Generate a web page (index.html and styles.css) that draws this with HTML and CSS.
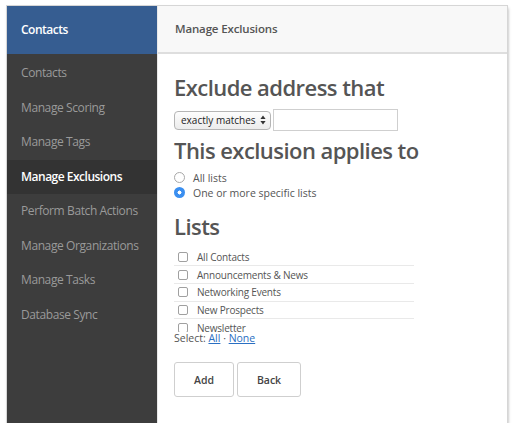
FILE: index.html
```html
<!DOCTYPE html>
<html>
<head>
<meta charset="utf-8">
<link rel="stylesheet" href="styles.css">
</head>
<body>
<div class="window">
  <aside class="sidebar">
    <div class="brand">Contacts</div>
    <nav class="nav">
      <div class="nav-item">Contacts</div>
      <div class="nav-item">Manage Scoring</div>
      <div class="nav-item">Manage Tags</div>
      <div class="nav-item active">Manage Exclusions</div>
      <div class="nav-item">Perform Batch Actions</div>
      <div class="nav-item">Manage Organizations</div>
      <div class="nav-item">Manage Tasks</div>
      <div class="nav-item">Database Sync</div>
    </nav>
  </aside>
  <main class="main">
    <header class="topbar">Manage Exclusions</header>
    <section class="content">
      <h2 class="heading first">Exclude address that</h2>
      <div class="match-row">
        <div class="select">
          <span>exactly matches</span>
          <svg class="arrows" width="6" height="10" viewBox="0 0 6 10"><path d="M3 0.5 L5.6 4 L0.4 4 Z M3 9.5 L5.6 6 L0.4 6 Z" fill="#333"/></svg>
        </div>
        <div class="text-input"></div>
      </div>
      <h2 class="heading second">This exclusion applies to</h2>
      <div class="radios">
        <label class="radio-row"><span class="radio"></span>All lists</label>
        <label class="radio-row"><span class="radio checked"></span>One or more specific lists</label>
      </div>
      <h2 class="heading third">Lists</h2>
      <div class="list-box">
        <div class="list-row"><span class="check"></span>All Contacts</div>
        <div class="list-row"><span class="check"></span>Announcements &amp; News</div>
        <div class="list-row"><span class="check"></span>Networking Events</div>
        <div class="list-row"><span class="check"></span>New Prospects</div>
        <div class="list-row"><span class="check"></span>Newsletter</div>
      </div>
      <div class="select-links">Select: <a href="#">All</a> · <a href="#">None</a></div>
      <div class="buttons">
        <button class="btn add">Add</button>
        <button class="btn back">Back</button>
      </div>
    </section>
  </main>
</div>
</body>
</html>
```
FILE: styles.css
```css
html, body {
  margin: 0;
  padding: 0;
  background: #ffffff;
}
body {
  padding: 6px 0 0 7px;
  font-family: "Open Sans", "Noto Sans", sans-serif;
  color: #555;
}
.window {
  width: 500px;
  height: 417px;
  display: flex;
  overflow: hidden;
  background: #fff;
  box-shadow: 0 0 0 1px #d6d6d6, 1px 2px 3px rgba(0,0,0,0.35);
}
.sidebar {
  width: 150px;
  flex: none;
  background: #3d3d3d;
  display: flex;
  flex-direction: column;
}
.brand {
  height: 48px;
  line-height: 47px;
  background: #365d91;
  color: #fff;
  font-weight: 600;
  font-size: 12px;
  letter-spacing: -0.5px;
  padding-left: 14px;
}
.nav {
  padding-top: 2px;
  display: flex;
  flex-direction: column;
}
.nav-item {
  height: 34.5px;
  line-height: 34px;
  padding-left: 14px;
  color: #9a9a9a;
  font-size: 12px;
  letter-spacing: -0.4px;
}
.nav-item.active {
  background: #333333;
  color: #fff;
  font-weight: 600;
  letter-spacing: -0.5px;
}
.main {
  flex: 1;
  display: flex;
  flex-direction: column;
  border-left: 1px solid #e8e8e8;
}
.topbar {
  height: 46px;
  line-height: 46px;
  background: #f8f8f8;
  border-bottom: 2px solid #dedede;
  padding-left: 17px;
  font-size: 11.5px;
  font-weight: 600;
  letter-spacing: -0.15px;
  color: #555;
}
.content {
  padding-left: 16px;
}
.heading {
  margin: 0;
  font-size: 22px;
  font-weight: 600;
  line-height: 26px;
  letter-spacing: -0.55px;
  color: #555;
}
.heading.first {
  margin-top: 20px;
}
.match-row {
  display: flex;
  align-items: center;
  margin-top: 9px;
  gap: 2px;
}
.select {
  width: 97px;
  height: 19px;
  box-sizing: border-box;
  border: 1px solid #b5b5b5;
  border-radius: 4px;
  background: linear-gradient(#fdfdfd, #ececec);
  display: flex;
  align-items: center;
  justify-content: space-between;
  padding: 0 4px 0 6px;
  font-size: 10px;
  white-space: nowrap;
  color: #222;
}
.text-input {
  width: 125px;
  height: 22px;
  box-sizing: border-box;
  border: 1px solid #cfcfcf;
  background: #fff;
}
.heading.second {
  margin-top: 6px;
}
.radios {
  margin-top: 7px;
  display: flex;
  flex-direction: column;
}
.radio-row {
  display: flex;
  align-items: center;
  height: 15px;
  font-size: 10.5px;
  color: #555;
}
.radio {
  width: 11px;
  height: 11px;
  box-sizing: border-box;
  border-radius: 50%;
  border: 1px solid #a8a8a8;
  background: #fff;
  margin-right: 8px;
  flex: none;
}
.radio.checked {
  border: none;
  background: radial-gradient(circle, #fff 0 1.8px, #3b8ff0 2.2px);
}
.heading.third {
  margin-top: 13px;
}
.list-box {
  margin-top: 9.5px;
  width: 240px;
  height: 83px;
  overflow: hidden;
}
.list-row {
  height: 17.7px;
  box-sizing: border-box;
  border-bottom: 1px solid #e9e9e9;
  display: flex;
  align-items: center;
  font-size: 10px;
  letter-spacing: -0.2px;
  color: #555;
  padding-left: 4px;
}
.check {
  width: 10px;
  height: 10px;
  box-sizing: border-box;
  border: 1px solid #a0a0a0;
  border-radius: 2px;
  background: #fff;
  margin-right: 9px;
  flex: none;
}
.select-links {
  font-size: 10.5px;
  line-height: 13px;
  color: #555;
}
.select-links a {
  color: #2a6fc2;
  text-decoration: underline;
}
.buttons {
  display: flex;
  gap: 3px;
  margin-top: 17.5px;
}
.btn {
  height: 35px;
  box-sizing: border-box;
  border: 1px solid #cfcfcf;
  border-radius: 3px;
  background: #fff;
  font-family: "Open Sans", "Noto Sans", sans-serif;
  font-size: 10.5px;
  font-weight: 600;
  color: #444;
  padding: 0;
}
.btn.add { width: 60px; }
.btn.back { width: 64px; }
```
